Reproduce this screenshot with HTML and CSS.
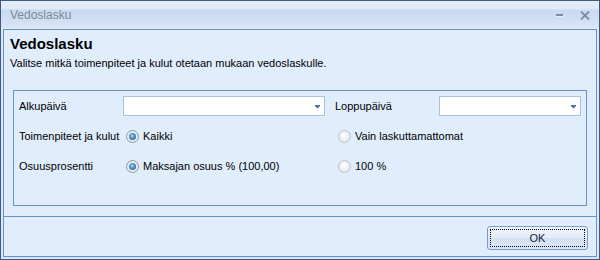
FILE: index.html
```html
<!DOCTYPE html>
<html lang="fi">
<head>
  <meta charset="UTF-8" />
  <title>Vedoslasku</title>
  <link rel="stylesheet" href="styles.css">
</head>
<body>

<div class="window">
  <!-- Title bar -->
  <div class="titlebar">
    <span class="title">Vedoslasku</span>
    <div class="controls">
      <span class="btn-min"></span>
      <svg class="btn-close" width="10" height="9" viewBox="0 0 10 9">
        <path d="M1 0.5 L9 8.5 M9 0.5 L1 8.5" stroke="#7d8ca0" stroke-width="1.8" fill="none"/>
      </svg>
    </div>
  </div>

  <div class="frame">
    <div class="header">
      <h1>Vedoslasku</h1>
      <p>Valitse mitkä toimenpiteet ja kulut otetaan mukaan vedoslaskulle.</p>
    </div>

    <div class="group">
      <div class="form-grid">
        <label>Alkupäivä</label>
        <div class="combo combo-wide">
          <svg class="arrow" width="5" height="4" viewBox="0 0 5 4"><path d="M0 0h5v1l-2.5 2.5L0 1z" fill="#4d6c9c"/></svg>
        </div>
        <label class="col3">Loppupäivä</label>
        <div class="combo">
          <svg class="arrow" width="5" height="4" viewBox="0 0 5 4"><path d="M0 0h5v1l-2.5 2.5L0 1z" fill="#4d6c9c"/></svg>
        </div>

        <label>Toimenpiteet ja kulut</label>
        <div class="option"><span class="radio checked"></span>Kaikki</div>
        <div class="option wide"><span class="radio"></span>Vain laskuttamattomat</div>

        <label>Osuusprosentti</label>
        <div class="option"><span class="radio checked"></span>Maksajan osuus % (100,00)</div>
        <div class="option wide"><span class="radio"></span>100 %</div>
      </div>
    </div>

    <div class="footer">
      <button class="btn-ok"><span>OK</span></button>
    </div>
  </div>
</div>

</body>
</html>
```

FILE: styles.css
```css
body {
  margin: 0;
  font-family: "Liberation Sans", Arial, sans-serif;
  font-size: 11px;
  color: #000;
}

.window {
  width: 600px;
  height: 260px;
  box-sizing: border-box;
  border: 1px solid #3e5a80;
  background: #dae7f8;
}

/* Title bar */
.titlebar {
  height: 28px;
  display: flex;
  justify-content: space-between;
  align-items: center;
  padding: 0 9px;
  background: linear-gradient(to bottom, #e4edf8 0, #e0eaf7 8px, #c8daf1 9px, #d0e0f3 20px, #dce8f6 27px, #e6eef9 28px);
}

.title {
  font-size: 12px;
  color: #7d8894;
}

.controls {
  display: flex;
  align-items: center;
  gap: 17px;
}

.btn-min {
  width: 7px;
  height: 2px;
  background: #7f8c9c;
  border-bottom: 1px solid #e8eef6;
  margin-top: 1px;
}

.btn-close {
  display: block;
}

/* Main frame */
.frame {
  margin: 0 2px 2px;
  height: 228px;
  box-sizing: border-box;
  border: 1px solid #6792cf;
  background: #e0edfd;
  display: flex;
  flex-direction: column;
}

.header {
  padding: 5px 6px 0;
}

.header h1 {
  margin: 0;
  font-size: 15px;
  line-height: 18px;
  font-weight: bold;
}

.header p {
  margin: 4px 0 0;
  line-height: 13px;
}

.group {
  margin: 20px 9px 10px;
  height: 116px;
  box-sizing: border-box;
  border: 1px solid #6792cf;
  padding: 5px 5px 0;
}

.form-grid {
  display: grid;
  grid-template-columns: 104px 212px 104px 142px;
  grid-auto-rows: 20px;
  row-gap: 10px;
  align-items: center;
}

.combo {
  height: 20px;
  box-sizing: border-box;
  border: 1px solid #a9c2e4;
  background: #fff;
  display: flex;
  justify-content: flex-end;
  align-items: center;
  padding-right: 4px;
}

.combo-wide {
  width: 202px;
}

.arrow {
  display: block;
  margin-top: 1px;
}

.option {
  display: flex;
  align-items: center;
  padding-left: 3px;
}

.option.wide {
  grid-column: span 2;
}

.radio {
  width: 13px;
  height: 13px;
  box-sizing: border-box;
  border-radius: 50%;
  border: 1px solid #bcc3cc;
  background: radial-gradient(circle at 45% 40%, #ffffff 0, #eef1f4 45%, #d6dbe1 100%);
  margin-right: 4px;
  display: flex;
  align-items: center;
  justify-content: center;
}

.radio.checked {
  border-color: #8d99a8;
  background: radial-gradient(circle, #f4f6f8 0, #dfe4ea 100%);
}

.radio.checked::after {
  content: "";
  width: 7px;
  height: 7px;
  border-radius: 50%;
  background: radial-gradient(circle at 45% 40%, #a6dcf5 0, #4a8fc0 45%, #24507e 100%);
}

/* Footer */
.footer {
  border-top: 1px solid #6792cf;
  flex: 1;
  display: flex;
  justify-content: flex-end;
  padding: 9px 8px 0 0;
}

.btn-ok {
  width: 101px;
  height: 24px;
  padding: 2px;
  border: 1px solid #7a9ad0;
  border-radius: 3px;
  background: linear-gradient(to bottom, #edf3fb 0, #e4ecf8 50%, #d3e1f4 51%, #dbe7f7 100%);
  font-family: "Liberation Sans", Arial, sans-serif;
  font-size: 11px;
  color: #141c3c;
}

.btn-ok span {
  display: flex;
  height: 100%;
  align-items: center;
  justify-content: center;
  box-sizing: border-box;
  border: 1px dotted #000;
}
```
